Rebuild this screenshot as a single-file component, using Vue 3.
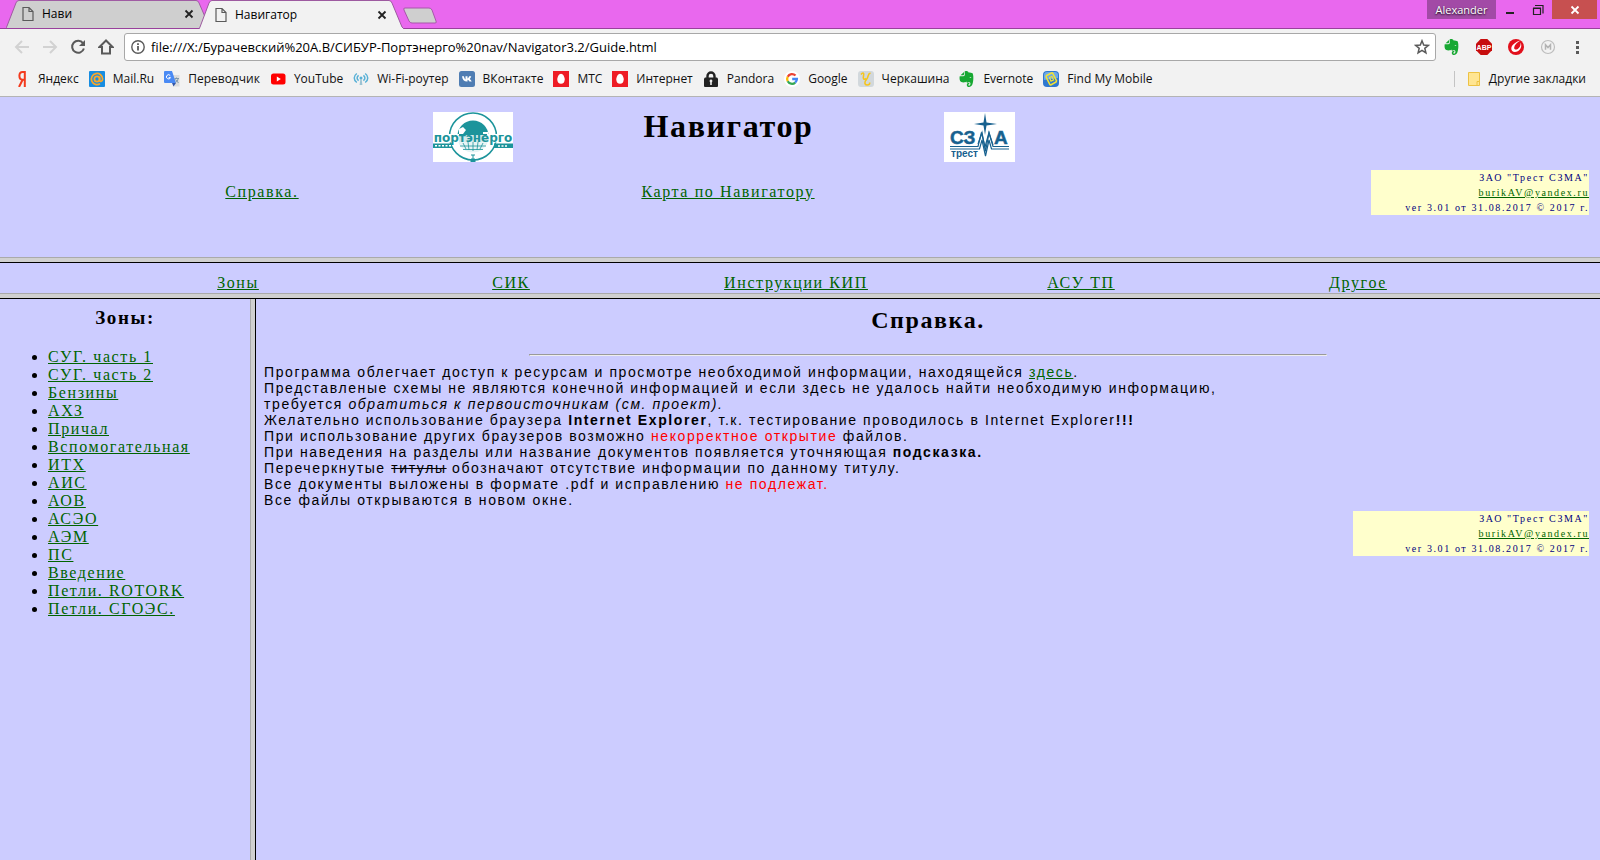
<script setup>
import { ref } from 'vue'

const address = ref('file:///X:/Бурачевский%20А.В/СИБУР-Портэнерго%20nav/Navigator3.2/Guide.html')

const tabs = [
  { title: 'Нави', active: false },
  { title: 'Навигатор', active: true },
]

const bookmarks = [
  { id: 'yandex', label: 'Яндекс' },
  { id: 'mail', label: 'Mail.Ru' },
  { id: 'translate', label: 'Переводчик' },
  { id: 'youtube', label: 'YouTube' },
  { id: 'wifi', label: 'Wi-Fi-роутер' },
  { id: 'vk', label: 'ВКонтакте' },
  { id: 'egg', label: 'МТС' },
  { id: 'egg', label: 'Интернет' },
  { id: 'lock', label: 'Pandora' },
  { id: 'google', label: 'Google' },
  { id: 'cherk', label: 'Черкашина' },
  { id: 'evernote', label: 'Evernote' },
  { id: 'find', label: 'Find My Mobile' },
]

const sections = ['Зоны', 'СИК', 'Инструкции КИП', 'АСУ ТП', 'Другое']

const zones = [
  'СУГ. часть 1', 'СУГ. часть 2', 'Бензины', 'АХЗ', 'Причал', 'Вспомогательная',
  'ИТХ', 'АИС', 'АОВ', 'АСЭО', 'АЭМ', 'ПС', 'Введение', 'Петли. ROTORK', 'Петли. СГОЭС.',
]
</script>

<template>
  <div class="window">
    <svg class="defs" width="0" height="0" aria-hidden="true">
      <symbol id="i-yandex" viewBox="0 0 16 16">
        <path d="M10.8 0v16M10.8 1H8.6C6.3 1 5.4 2.7 5.4 4.8S6.5 8.7 8.6 8.7h2.2M8.6 8.7L5 16" fill="none" stroke="#f33a1d" stroke-width="2" />
      </symbol>
      <symbol id="i-mail" viewBox="0 0 16 16">
        <rect width="16" height="16" rx="1" fill="#168de2" />
        <circle cx="8" cy="8" r="2.6" fill="none" stroke="#f9a72b" stroke-width="1.8" />
        <path d="M10.6 5.4v3.4c0 2.6 3 2 3-.8A5.6 5.6 0 1 0 11 12.8" fill="none" stroke="#f9a72b" stroke-width="1.7" />
      </symbol>
      <symbol id="i-translate" viewBox="0 0 16 16">
        <path d="M6 4h9.500v11.500H9.500z" fill="#dcdcdc" />
        <path d="M1 0h7l4 12H1a1 1 0 0 1-1-1V1a1 1 0 0 1 1-1z" fill="#4a8af4" />
        <path d="M8 12h4l-2.500 3.500z" fill="#3257a8" />
        <path d="M6.300 4.700A2.100 2.100 0 1 0 6.500 6.600H4.600" fill="none" stroke="#fff" stroke-width="1" />
        <path d="M10.500 7.500h4.500M12.500 6.500v1M14 7.500c0 2-1.500 3.500-2.500 4M11.500 8.500l3 3.500" fill="none" stroke="#7d97ab" stroke-width="1" />
      </symbol>
      <symbol id="i-youtube" viewBox="0 0 16 16">
        <rect x="1" y="2.500" width="14.500" height="11" rx="2.500" fill="#f00" />
        <path d="M6.800 5.600v4.800L10.800 8z" fill="#fff" />
      </symbol>
      <symbol id="i-wifi" viewBox="0 0 16 16">
        <g fill="none" stroke="#57b0d6" stroke-width="1.500">
          <path d="M3.800 2.500c-3.400 2.500-3.400 6.500 0 9M12.200 2.500c3.400 2.500 3.400 6.500 0 9M5.600 4.300c-2 1.600-2 3.900 0 5.400M10.400 4.300c2 1.600 2 3.900 0 5.400" />
        </g>
        <circle cx="8" cy="7" r="1.500" fill="#57b0d6" />
        <path d="M7.400 8h1.200l.8 6H6.600z" fill="#9cc3d3" />
      </symbol>
      <symbol id="i-vk" viewBox="0 0 16 16">
        <rect width="16" height="16" rx="2.500" fill="#4f7db3" />
        <path d="M3 5.200h1.900c.4 1.800 1 2.900 1.600 3.200V5.200h2v2.300c.7-.3 1.200-1.100 1.700-2.300h2.100c-.3 1.200-1 2.100-1.600 2.700.8.500 1.500 1.400 2 2.600h-2.200c-.4-.9-1-1.600-2-1.800v1.800C5.300 10.700 3.400 8.800 3 5.200z" fill="#fff" />
      </symbol>
      <symbol id="i-egg" viewBox="0 0 16 16">
        <rect width="16" height="16" fill="#ee1c25" />
        <path d="M8 2.800c1.900 0 3.700 3 3.700 5.600S10.200 12.800 8 12.800s-3.700-1.800-3.700-4.400S6.100 2.800 8 2.800z" fill="#fff" />
      </symbol>
      <symbol id="i-lock" viewBox="0 0 16 16">
        <path d="M4.500 8V5a3.500 3.500 0 0 1 7 0v3" fill="none" stroke="#222" stroke-width="2.400" />
        <path d="M2 6.500h12l1 1V15a1 1 0 0 1-1 1H2a1 1 0 0 1-1-1V7.500z" fill="#222" />
        <path d="M8 8.500a1.500 1.500 0 0 1 .8 2.700V14H7.200v-2.800A1.500 1.500 0 0 1 8 8.500z" fill="#eee" />
      </symbol>
      <symbol id="i-google" viewBox="0 0 16 16">
        <circle cx="8" cy="8" r="8" fill="#fff" />
        <g fill="none" stroke-width="2.300">
          <path d="M11.500 4.500A4.900 4.900 0 0 0 3.700 5.700" stroke="#ea4335" />
          <path d="M3.700 5.700a4.900 4.900 0 0 0 0 4.600" stroke="#fbbc05" />
          <path d="M3.700 10.300a4.900 4.900 0 0 0 7.500 1.300" stroke="#34a853" />
          <path d="M11.200 11.600A4.900 4.900 0 0 0 12.900 8H8.200" stroke="#4285f4" />
        </g>
      </symbol>
      <symbol id="i-cherk" viewBox="0 0 16 16">
        <rect width="16" height="16" rx="3" fill="#d2d8dc" />
        <path d="M3 3.500C5 1 6.300 2 5.500 5S6 9 8 7.500M12.500 2C9 3 11 6 8.500 8.500S6.500 14 9 14s3-1 2.500-2.500" fill="none" stroke="#f6c51b" stroke-width="1.600" />
      </symbol>
      <symbol id="i-evernote" viewBox="0 0 16 16">
        <path d="M1.500 4.300L5 .9v2.600c0 .5-.3.800-.8.800zM5.600.5c2-.9 3.400-.2 4 .9 1.300.1 3.300.3 4 .8.900 1.700 1 6.300.3 9.400-.6 2.900-1.700 4.400-3.700 4.400-1.700 0-2.500-1-2.400-2.300.1-1.200 1-2 2.500-1.900v1.400c-.8-.1-1.100.2-1.100.7 0 .6.500.8 1.100.7.900-.1 1.200-1.100 1.100-2.600-.3-.6-1-1-1.600-1-.8 1-2.100 1-2.500-.5-.7 1.200-5.400 1.400-6.200-.4C.5 8.600.4 6.900.7 5.200h3.600c1 0 1.500-.5 1.500-1.400z" fill="#17a832" />
        <path d="M10.500 6.700c.2-1.100 1.600-1.100 1.900.2z" fill="#cfe9d2" />
      </symbol>
      <symbol id="i-find" viewBox="0 0 16 16">
        <rect width="16" height="16" rx="4" fill="#2f78cf" />
        <path d="M1 4a3 3 0 0 1 3-3h8a3 3 0 0 1 3 3v3L1 9z" fill="#6ea9e8" />
        <g fill="none" stroke="#f2e234">
          <path d="M3.500 4.500l5-2.500a1 1 0 0 1 1.300.4l3.700 7.300-.4 1.300-5 2.700a1 1 0 0 1-1.300-.4L3.100 6z" stroke-width="1.600" />
          <path d="M6.500 6.500l2.500-1 1.500 3.500-2.500 1.200z" stroke-width="1.200" />
        </g>
      </symbol>
      <symbol id="i-trend" viewBox="0 0 16 16">
        <circle cx="8" cy="8" r="8" fill="#e2101c" />
        <path d="M12.500 1.600C7.500 3 3.600 6 3.300 9.300 3 12.600 6.500 14 9.800 12.200c3.200-1.800 4.400-5.600 2.700-8.400.4 2.700-.8 5-2.700 6.200-2 1.200-3.900.5-3.600-1.500C6.500 6 9 3.500 12.500 1.600z" fill="#fff" />
      </symbol>
      <symbol id="i-m" viewBox="0 0 16 16">
        <circle cx="8" cy="8" r="6.500" fill="none" stroke="#bdbdbd" stroke-width="1.200" />
        <path d="M5.500 10.800V5.700L8 8.600l2.500-2.900v5.100" fill="none" stroke="#b3b3b3" stroke-width="1.500" />
      </symbol>
      <symbol id="i-page" viewBox="0 0 12 16">
        <path d="M1 1.500h6L11 5.500v9H1z M7 1.500v4h4" fill="none" stroke="#5a5a5a" stroke-width="1.200" />
      </symbol>
    </svg>

    <header class="chrome">
      <div class="strip">
        <div v-for="tab in tabs" :key="tab.title" class="tab" :class="{ active: tab.active }">
          <svg class="tab-shape" viewBox="0 0 206 29" preserveAspectRatio="none" aria-hidden="true">
            <path d="M0 29L1 27L10 3Q11 .5 13 .5H190Q192 .5 193 3L203 27L205 29" />
          </svg>
          <svg class="tab-icon" width="12" height="16"><use href="#i-page" /></svg>
          <span class="tab-title">{{ tab.title }}</span>
          <button class="tab-close" aria-label="Закрыть вкладку">
            <svg width="10" height="10" viewBox="0 0 10 10"><path d="M1.500 1.500l7 7M8.500 1.500l-7 7" stroke="currentColor" stroke-width="1.800" /></svg>
          </button>
        </div>
        <button class="new-tab" aria-label="Новая вкладка">
          <svg width="36" height="18" viewBox="0 0 36 18"><path d="M3 1h24q2 0 3 2l4 11q1 2-1 2H10q-2 0-3-2L2 3q-1-2 1-2z" fill="#cfcfcf" stroke="#a757aa" /></svg>
        </button>
        <div class="controls">
          <button class="user">Alexander</button>
          <button class="ctl" aria-label="Свернуть"><svg width="12" height="12"><path d="M2 9h8" stroke="#222" stroke-width="2" /></svg></button>
          <button class="ctl" aria-label="Восстановить"><svg width="12" height="12"><path d="M1.500 4.500h7v6h-7zM3 1.500h8v8M1 4h8" fill="none" stroke="#222" stroke-width="1.200" /></svg></button>
          <button class="ctl close" aria-label="Закрыть"><svg width="10" height="10"><path d="M1.500 1.500l7 7M8.500 1.500l-7 7" stroke="#fff" stroke-width="1.800" /></svg></button>
        </div>
      </div>

      <div class="toolbar">
        <button class="nav" aria-label="Назад"><svg width="16" height="16"><path d="M15 8H2.500M8 2L2 8l6 6" fill="none" stroke="#d2d2d2" stroke-width="2" /></svg></button>
        <button class="nav" aria-label="Вперёд"><svg width="16" height="16"><path d="M1 8h12.500M8 2l6 6-6 6" fill="none" stroke="#d2d2d2" stroke-width="2" /></svg></button>
        <button class="nav" aria-label="Обновить"><svg width="16" height="16"><path d="M13 4.200A6 6 0 1 0 13.900 9.500" fill="none" stroke="#5a5a5a" stroke-width="2" /><path d="M15 1v6H9z" fill="#5a5a5a" /></svg></button>
        <button class="nav" aria-label="Домой"><svg width="16" height="16"><path d="M8 1.500L1.500 8H4v6.500h8V8h2.500z" fill="none" stroke="#5a5a5a" stroke-width="2" /></svg></button>
        <div class="omnibox">
          <svg width="16" height="16"><circle cx="8" cy="8" r="6.200" fill="none" stroke="#5a5a5a" stroke-width="1.400" /><path d="M8 7v4.500M8 4.300V6" stroke="#5a5a5a" stroke-width="1.800" /></svg>
          <input v-model="address" type="text" aria-label="Адресная строка" />
          <button class="star" aria-label="Добавить в закладки"><svg width="16" height="16"><path d="M8 1.800l1.700 4.300 4.600.3-3.500 2.900 1.100 4.500L8 11.300l-3.900 2.500 1.100-4.500-3.500-2.900 4.600-.3z" fill="none" stroke="#5a5a5a" stroke-width="1.500" /></svg></button>
        </div>
        <div class="extensions">
          <button aria-label="Evernote"><svg width="16" height="16"><use href="#i-evernote" /></svg></button>
          <button aria-label="Adblock Plus">
            <svg width="16" height="16" viewBox="0 0 16 16">
              <path d="M4.700 0h6.600L16 4.700v6.600L11.300 16H4.700L0 11.300V4.700z" fill="#c70d0d" />
              <text x="8" y="11" font-size="7" font-weight="700" text-anchor="middle" fill="#fff" font-family="Liberation Sans, sans-serif">ABP</text>
            </svg>
          </button>
          <button aria-label="Trend Micro"><svg width="16" height="16"><use href="#i-trend" /></svg></button>
          <button aria-label="M"><svg width="16" height="16"><use href="#i-m" /></svg></button>
        </div>
        <button class="menu" aria-label="Меню"><svg width="4" height="16" fill="#5a5a5a"><rect y="2" width="3" height="3" /><rect y="7" width="3" height="3" /><rect y="12" width="3" height="3" /></svg></button>
      </div>

      <nav class="bookmarks">
        <a v-for="b in bookmarks" :key="b.label" href="#"><svg width="16" height="16"><use :href="'#i-' + b.id" /></svg>{{ b.label }}</a>
        <a class="other" href="#"><svg width="14" height="16"><path d="M1.500 1.500h11v9.500M1.500 1.500v13h9" fill="#ffe592" stroke="#edc244" /><path d="M2 2h10v12H2z" fill="#ffe592" /><path d="M10 14.500v-4h2.500v4z" fill="#ffe592" stroke="#edc244" /></svg>Другие закладки</a>
      </nav>
    </header>

    <section class="top-frame">
      <div class="brand">
        <svg width="80" height="50" viewBox="0 0 80 50" role="img" aria-label="Портэнерго">
          <rect width="80" height="50" fill="#fff" />
          <circle cx="40" cy="24.500" r="23.500" fill="none" stroke="#1c949b" stroke-width="1.500" />
          <circle cx="40" cy="24" r="15.500" fill="#1c949b" />
          <path d="M25 29h30a15.500 15.500 0 0 1-30 0z" fill="#e8f4f5" />
          <path d="M27 34h26M30 37.500h20M40 30v9M35 30l1 8M45 30l-1 8M30 31l3 6M50 31l-3 6" fill="none" stroke="#1c949b" stroke-width=".8" />
          <path d="M26 17l4-2 3 3-3 4h-4zM50 20h5v2h-5z" fill="#fff" />
          <path d="M0 22h26v8.500H0zM54 22h26v8.500H54z" fill="#fff" />
          <path d="M26 23h28v7H26z" fill="#d3ebec" />
          <text x="40" y="30" font-size="12" font-weight="700" text-anchor="middle" fill="#1c949b" font-family="DejaVu Sans, sans-serif">портэнерго</text>
          <path d="M0 31.500h19v4.500H0zM61 31.500h19v4.500H61z" fill="#1c949b" />
          <path d="M2 33.700h16M65 34h10" stroke="#fff" stroke-width="1.500" stroke-dasharray="2 1.500" />
          <path d="M38 43h4M40 43v7M38 47h4v3h-4z" fill="#1c949b" stroke="#1c949b" />
        </svg>
        <h1>Навигатор</h1>
        <svg width="71" height="50" viewBox="0 0 71 50" role="img" aria-label="СЗМА трест">
          <rect width="71" height="50" fill="#fff" />
          <text x="6" y="32" font-size="19" font-weight="700" fill="#17618f" stroke="#17618f" stroke-width=".5" font-family="Liberation Sans, sans-serif">СЗ</text>
          <text x="50" y="32" font-size="19" font-weight="700" fill="#17618f" stroke="#17618f" stroke-width=".5" font-family="Liberation Sans, sans-serif">А</text>
          <path d="M41 1l1.500 9.500L53 12l-10.500 1.500L41 23l-1.500-9.500L30 12l9.500-1.500z" fill="#17618f" />
          <g fill="none" stroke="#17618f" stroke-width="1.200">
            <path d="M6 34.500h28l3.500-14L41 35l4-14.500 4 14h16" />
            <path d="M6 37h29.500l2.500-9 3.500 16 3.500-16 2.500 9H65" />
            <path d="M34 32l4-11.500 3.500 19L45 21l4 12" />
          </g>
          <text x="7" y="45" font-size="10" font-weight="700" fill="#17618f" font-family="Liberation Sans, sans-serif">трест</text>
        </svg>
      </div>
      <div class="top-links">
        <a href="#">Справка.</a>
        <a href="#">Карта по Навигатору</a>
        <address class="credits narrow">ЗАО "Трест СЗМА"<br /><a href="#">burikAV@yandex.ru</a><br />ver 3.01 от 31.08.2017 © 2017 г.</address>
      </div>
    </section>

    <nav class="sections">
      <a v-for="s in sections" :key="s" href="#">{{ s }}</a>
    </nav>

    <div class="frames">
      <aside>
        <h3>Зоны:</h3>
        <ul>
          <li v-for="z in zones" :key="z"><a href="#">{{ z }}</a></li>
        </ul>
      </aside>
      <main>
        <h2>Справка.</h2>
        <hr />
        <p>
          Программа облегчает доступ к ресурсам и просмотре необходимой информации, находящейся <a href="#">здесь</a>.<br />
          Представленые схемы не являются конечной информацией и если здесь не удалось найти необходимую информацию,<br />
          требуется <i>обратиться к первоисточникам (см. проект).</i><br />
          Желательно использование браузера <b>Internet Explorer</b>, т.к. тестирование проводилось в Internet Explorer<b>!!!</b><br />
          При использование других браузеров возможно <span class="red">некорректное открытие</span> файлов.<br />
          При наведения на разделы или название документов появляется уточняющая <b>подсказка.</b><br />
          Перечеркнутые <s>титулы</s> обозначают отсутствие информации по данному титулу.<br />
          Все документы выложены в формате .pdf и исправлению <span class="red">не подлежат.</span><br />
          Все файлы открываются в новом окне.
        </p>
        <address class="credits">ЗАО "Трест СЗМА"<br /><a href="#">burikAV@yandex.ru</a><br />ver 3.01 от 31.08.2017 © 2017 г.</address>
      </main>
    </div>
  </div>
</template>

<style>
body {
  margin: 0;
}
</style>

<style scoped>
.window {
  display: flex;
  flex-direction: column;
  min-height: 100vh;
  background: #ccccff;
  color: #000;
  font: 16px/18px "Liberation Serif", serif;
  letter-spacing: 0.1em;
}
.defs {
  position: absolute;
}
svg {
  display: block;
  flex: none;
  letter-spacing: normal;
}
button {
  display: flex;
  align-items: center;
  justify-content: center;
  padding: 0;
  border: 0;
  background: none;
  color: inherit;
  font: inherit;
  letter-spacing: inherit;
}

/* browser chrome */
.chrome {
  background: #f2f2f2;
  border-bottom: 1px solid #b4b4b4;
  font: 12px/16px "Open Sans", "Noto Sans", sans-serif;
  letter-spacing: normal;
}
.strip {
  display: flex;
  align-items: flex-start;
  height: 28px;
  padding-left: 6px;
  background: #e968ee;
  border-bottom: 1px solid #99419c;
}
.tab {
  position: relative;
  display: flex;
  align-items: center;
  box-sizing: border-box;
  width: 206px;
  height: 28px;
  padding: 0 18px 0 16px;
  margin-right: -13px;
}
.tab.active {
  z-index: 1;
  height: 29px;
}
.tab-shape {
  position: absolute;
  inset: 0;
  width: 100%;
  height: 100%;
  fill: #cfcfcf;
  stroke: #9d5aa0;
}
.active .tab-shape {
  fill: #f2f2f2;
}
.tab-icon,
.tab-title,
.tab-close {
  position: relative;
}
.tab-title {
  flex: 1;
  margin-left: 8px;
}
.tab-close {
  color: #222;
}
.new-tab {
  margin: 7px 0 0 10px;
}
.controls {
  display: flex;
  height: 19px;
  margin-left: auto;
  padding-right: 3px;
}
.user {
  width: 69px;
  background: #a24aa6;
  color: #fff;
  text-shadow: 0 1px 2px #000;
  font-size: 11px;
}
.ctl {
  width: 28px;
}
.ctl.close {
  width: 45px;
  background: #c75050;
}
.toolbar {
  display: flex;
  align-items: center;
  height: 28px;
  padding: 4px 20px 4px 14px;
}
.nav {
  width: 16px;
  margin-right: 12px;
}
.omnibox {
  display: flex;
  flex: 1;
  align-items: center;
  height: 26px;
  margin-left: -2px;
  padding: 0 5px;
  background: #fff;
  border: 1px solid #a8a8a8;
  border-radius: 3px;
}
.omnibox input {
  flex: 1;
  min-width: 0;
  padding: 0 5px;
  border: 0;
  outline: 0;
  background: none;
  color: #000;
  font: 13px/20px "Open Sans", "Noto Sans", sans-serif;
}
.extensions {
  display: flex;
  gap: 16px;
  margin: 0 20px 0 8px;
}
.bookmarks {
  display: flex;
  align-items: center;
  gap: 10px;
  height: 16px;
  padding: 6px 14px 9px;
}
.bookmarks a {
  display: flex;
  align-items: center;
  gap: 8px;
  color: #111;
  text-decoration: none;
  white-space: nowrap;
}
.bookmarks .other {
  margin-left: auto;
  padding-left: 12px;
  border-left: 1px solid #c4c4c4;
}

/* page frames */
a {
  color: #006400;
}
h1,
h2,
h3 {
  margin: 0;
  text-align: center;
}
.top-frame {
  box-sizing: border-box;
  min-height: 160px;
  padding-top: 15px;
}
.brand {
  display: flex;
  justify-content: center;
  gap: 131px;
  padding-right: 152px;
}
h1 {
  font-size: 32px;
  line-height: 28px;
}
.top-links {
  display: grid;
  grid-template-columns: 524fr 408fr 668fr;
  align-items: center;
  justify-items: center;
  margin-top: 8px;
}
.top-links > a {
  padding-bottom: 2px;
}
.credits {
  box-sizing: border-box;
  width: 236px;
  margin: 3px 3px 0 auto;
  background: #ffffcc;
  color: #000080;
  font: 10px/15px "Liberation Serif", serif;
  text-align: right;
}
.credits.narrow {
  width: 218px;
  margin: 0 11px 0 auto;
}
.sections {
  display: grid;
  grid-template-columns: 276fr 270fr 300fr 270fr 284fr;
  justify-items: center;
  padding: 16px 100px 1px;
  border-top: 1px solid #aaa;
  box-shadow: inset 0 4px #d0d0d0, inset 0 5px #000;
}
.frames {
  display: grid;
  grid-template-columns: 250px 1fr;
  flex: 1;
  border-top: 1px solid #aaa;
  background: linear-gradient(#d0d0d0 4px, #000 4px, #000 5px, transparent 5px);
}
aside {
  margin-top: 5px;
  padding: 8px;
}
h3 {
  font-size: 19px;
  line-height: 22px;
}
ul {
  margin: 19px 0 0;
  padding-left: 40px;
}
main {
  margin-top: 5px;
  padding: 8px 8px 8px 13px;
  border-left: 1px solid #aaa;
  box-shadow: inset 4px 0 #d0d0d0, inset 5px 0 #000;
}
h2 {
  font-size: 24px;
  line-height: 27px;
}
hr {
  width: 60%;
  margin: 20px auto 8px;
}
p {
  margin: 0;
  font: 14px/16px "Liberation Sans", sans-serif;
}
.red {
  color: #f00;
}
</style>
